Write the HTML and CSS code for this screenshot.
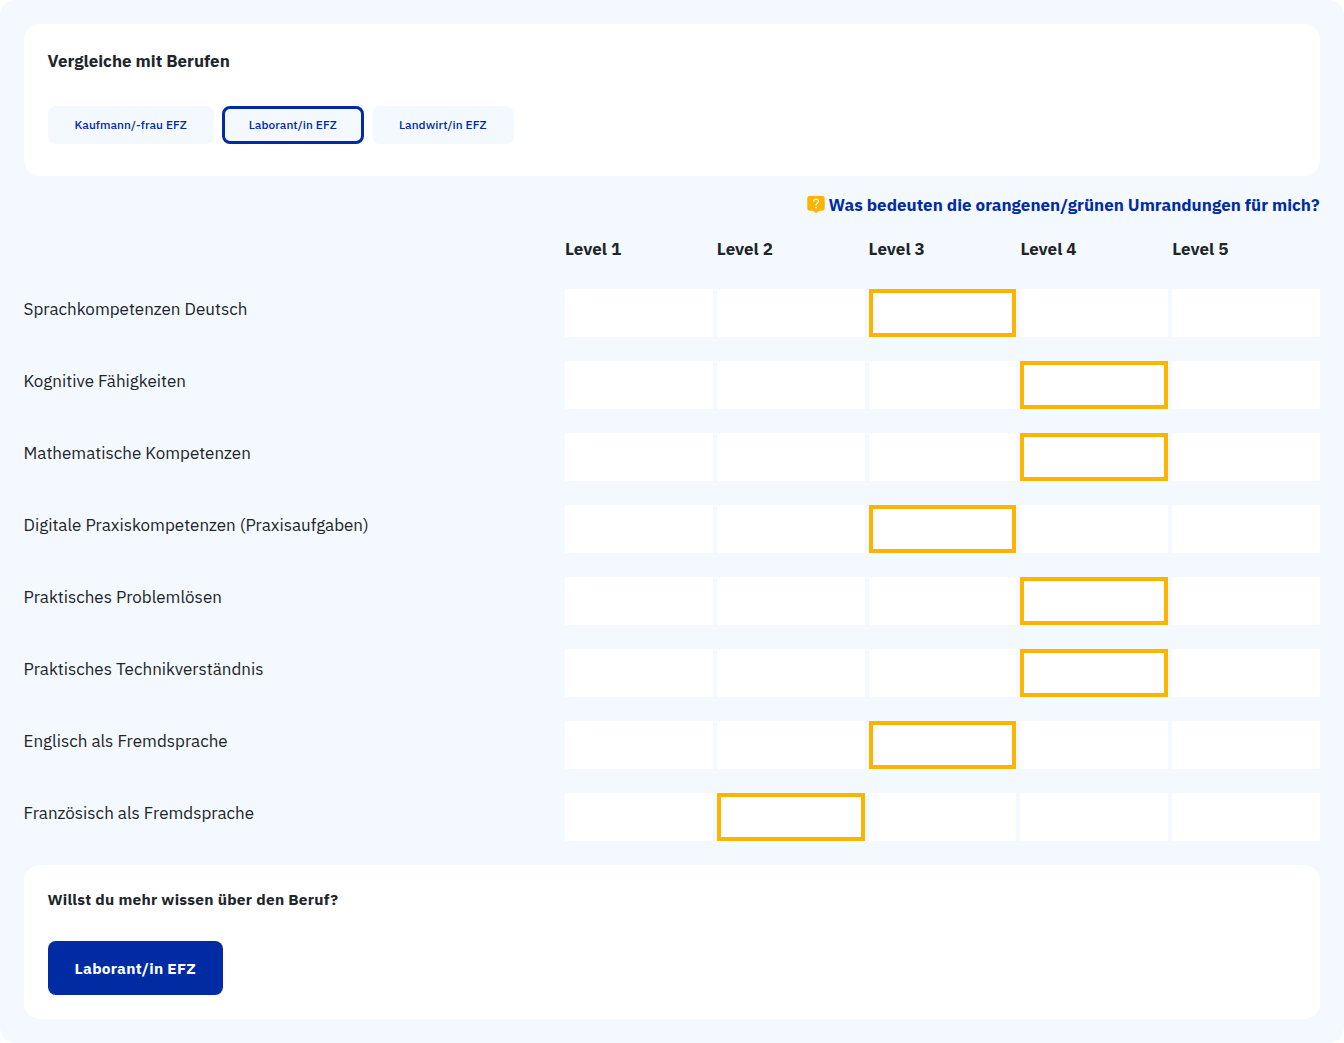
FILE: index.html
```html
<!DOCTYPE html>
<html lang="de">
<head>
<meta charset="utf-8">
<title>Vergleiche mit Berufen</title>
<link rel="stylesheet" href="styles.css">
</head>
<body>
<main class="panel">
  <section class="card compare">
    <h2 class="compare-title">Vergleiche mit Berufen</h2>
    <div class="chips">
      <button class="chip chip-wide">Kaufmann/-frau EFZ</button>
      <button class="chip chip-active">Laborant/in EFZ</button>
      <button class="chip">Landwirt/in EFZ</button>
    </div>
  </section>
  <a class="help">
    <svg class="help-icon" viewBox="0 0 18 18" width="18" height="18">
      <path fill="#fbb400" d="M2.500 0h13A2.200 2.200 0 0 1 17.700 2.200v10.300a2.200 2.200 0 0 1-2.200 2.200H12L9 17.200 6 14.700H2.500A2.200 2.200 0 0 1 .3 12.500V2.200A2.200 2.200 0 0 1 2.500 0z"/>
      <path fill="none" stroke="#fff" stroke-width="1.300" d="M6.600 5.400C6.700 2.500 11.500 2.500 11.500 5.300c0 1.700-2.500 1.700-2.500 4.100"/>
      <circle cx="9" cy="11.600" r=".95" fill="#fff"/>
    </svg>
    <span>Was bedeuten die orangenen/grünen Umrandungen für mich?</span>
  </a>
  <div class="levels">
    <div class="levels-head"><span>Level 1</span><span>Level 2</span><span>Level 3</span><span>Level 4</span><span>Level 5</span></div>
  </div>
  <div class="rows">
    <div class="row"><span class="skill">Sprachkompetenzen Deutsch</span><div class="cells"><i></i><i></i><i class="required"></i><i></i><i></i></div></div>
    <div class="row"><span class="skill">Kognitive Fähigkeiten</span><div class="cells"><i></i><i></i><i></i><i class="required"></i><i></i></div></div>
    <div class="row"><span class="skill">Mathematische Kompetenzen</span><div class="cells"><i></i><i></i><i></i><i class="required"></i><i></i></div></div>
    <div class="row"><span class="skill">Digitale Praxiskompetenzen (Praxisaufgaben)</span><div class="cells"><i></i><i></i><i class="required"></i><i></i><i></i></div></div>
    <div class="row"><span class="skill">Praktisches Problemlösen</span><div class="cells"><i></i><i></i><i></i><i class="required"></i><i></i></div></div>
    <div class="row"><span class="skill">Praktisches Technikverständnis</span><div class="cells"><i></i><i></i><i></i><i class="required"></i><i></i></div></div>
    <div class="row"><span class="skill">Englisch als Fremdsprache</span><div class="cells"><i></i><i></i><i class="required"></i><i></i><i></i></div></div>
    <div class="row"><span class="skill">Französisch als Fremdsprache</span><div class="cells"><i></i><i class="required"></i><i></i><i></i><i></i></div></div>
  </div>
  <section class="card more">
    <h3 class="more-title">Willst du mehr wissen über den Beruf?</h3>
    <button class="primary">Laborant/in EFZ</button>
  </section>
</main>
</body>
</html>
```
FILE: styles.css
```css
* { box-sizing: border-box; }
body {
  margin: 0;
  background: #fff;
  color: #212529;
  font-family: "IBM Plex Sans", "Open Sans", "Noto Sans", sans-serif;
  font-size: 17px;
  line-height: 24px;
}
button { border: 0; margin: 0; font: inherit; }
.panel {
  height: 1043px;
  padding: 24px;
  border-radius: 16px;
  background: #f4f9ff;
}
.card { padding: 24px; border-radius: 16px; background: #fff; }
.compare { height: 152px; }
.compare-title { margin: 1px 0 33px; font-size: 17px; font-weight: 700; text-indent: -0.5px; }
.chips { display: flex; gap: 8px; }
.chip {
  width: 142px;
  height: 38px;
  padding: 0;
  border-radius: 8px;
  background: #f4f9ff;
  color: #002ba3;
  font-size: 11.9px;
  font-weight: 500;
  letter-spacing: 0.06px;
  text-indent: -0.5px;
}
.chip-wide { width: 166px; }
.chip-active { border: 3px solid #002ba3; }
.help {
  display: flex;
  justify-content: flex-end;
  gap: 3.5px;
  height: 24px;
  margin-top: 17px;
  padding-right: 0.5px;
  color: #002ba3;
  font-weight: 700;
}
.help-icon { flex: none; margin-top: 3px; }
.levels { display: flex; justify-content: flex-end; height: 24px; margin-top: 20px; }
.levels-head, .cells {
  display: grid;
  grid-template-columns: repeat(5, 1fr);
  column-gap: 4px;
  width: 755px;
}
.levels-head { font-weight: 700; }
.rows { display: grid; row-gap: 24px; margin-top: 28px; }
.row { display: flex; justify-content: space-between; height: 48px; }
.skill { padding-top: 8px; font-weight: 400; text-indent: -0.5px; }
.cells i { background: #fff; }
.cells .required { border: 4px solid #fbb400; }
.more { height: 154px; margin-top: 24px; }
.more-title {
  margin: -2px 0 30px;
  font-size: 15.5px;
  font-weight: 700;
  letter-spacing: 0.25px;
  text-indent: -0.5px;
}
.primary {
  width: 175px;
  height: 54px;
  padding: 0;
  border-radius: 8px;
  background: #002ba3;
  color: #fff;
  font-size: 15.5px;
  font-weight: 700;
  letter-spacing: 0.25px;
  text-indent: -0.5px;
}
```
